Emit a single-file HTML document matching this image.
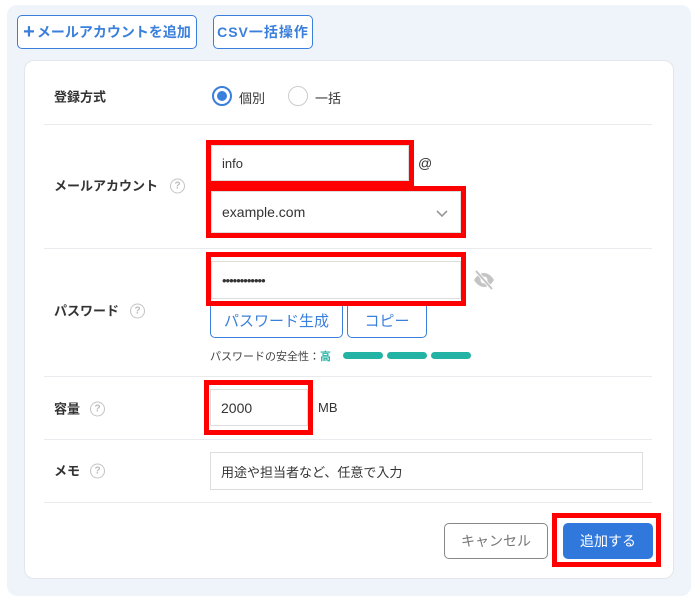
<!DOCTYPE html><html><head><meta charset="utf-8"><style>
*{box-sizing:border-box;margin:0;padding:0}
body{width:700px;height:601px;background:#fff;font-family:"Liberation Sans","Noto Sans CJK JP",sans-serif;color:#333;position:relative;overflow:hidden;font-size:13px}
.a{position:absolute}
.panel{left:7px;top:5px;width:684px;height:591px;background:#eff4fb;border-radius:10px}
.card{left:24px;top:60px;width:650px;height:519px;background:#fff;border:1px solid #e3e6ea;border-radius:10px}
.btn{border:1.5px solid #3a7fdc;border-radius:5px;background:#fff;color:#3a7fdc;display:flex;align-items:center;justify-content:center;font-size:14px;font-weight:bold}
.obtn{border:1px solid #3a7fdc;border-radius:5px;color:#3a7fdc;display:flex;align-items:center;justify-content:center;font-size:15px;background:#fff}
.lbl{font-weight:bold;font-size:13px;color:#333;transform:translateY(-50%)}
.hr{height:1px;background:#e8eaed;left:44px;width:608px}
.q{width:15px;height:15px;border:1.5px solid #c4c4c4;border-radius:50%;color:#bbb;font-size:10px;font-weight:bold;display:flex;align-items:center;justify-content:center;transform:translateY(-50%)}
.red{border:5px solid #f00}
.inp{border:1px solid #ddd;background:#fff;display:flex;align-items:center;padding-left:10px;font-size:14px;color:#333}
.bar{height:7px;width:40px;background:#22b3a4;border-radius:4px;top:352px}
</style></head><body>
<div class="a panel"></div>
<div class="a btn" style="left:17px;top:15px;width:180px;height:34px"><span style="font-size:20px;margin-right:2px;font-weight:bold">+</span>メールアカウントを追加</div>
<div class="a btn" style="left:213px;top:15px;width:100px;height:34px;letter-spacing:1px">CSV一括操作</div>
<div class="a card"></div>

<div class="a lbl" style="left:54px;top:96px">登録方式</div>
<div class="a" style="left:212px;top:86px;width:20px;height:20px;border:2px solid #3a7fdc;border-radius:50%"><div style="margin:3px;width:10px;height:10px;border-radius:50%;background:#3a7fdc"></div></div>
<div class="a" style="left:239px;top:88px;font-size:13px">個別</div>
<div class="a" style="left:288px;top:86px;width:20px;height:20px;border:1.5px solid #ccc;border-radius:50%"></div>
<div class="a" style="left:315px;top:88px;font-size:13px">一括</div>
<div class="a hr" style="top:124px"></div>

<div class="a lbl" style="left:54px;top:185px">メールアカウント</div>
<div class="a q" style="left:170px;top:186px">?</div>
<div class="a red" style="left:206px;top:140px;width:208px;height:46px"></div>
<div class="a inp" style="left:211px;top:145px;width:198px;height:36px;font-size:13px">info</div>
<div class="a" style="left:418px;top:155px;font-size:14px">@</div>
<div class="a red" style="left:206px;top:186px;width:260px;height:52px"></div>
<div class="a inp" style="left:211px;top:191px;width:250px;height:42px">example.com</div>
<svg class="a" style="left:435px;top:209px" width="14" height="10"><path d="M2 2l5 5 5-5" stroke="#999" stroke-width="1.6" fill="none"/></svg>
<div class="a hr" style="top:248px"></div>

<div class="a lbl" style="left:54px;top:310px">パスワード</div>
<div class="a q" style="left:130px;top:311px">?</div>
<div class="a obtn" style="left:210px;top:302px;width:133px;height:36px">パスワード生成</div>
<div class="a obtn" style="left:347px;top:302px;width:80px;height:36px">コピー</div>
<div class="a red" style="left:206px;top:252px;width:260px;height:54px"></div>
<div class="a inp" style="left:211px;top:261px;width:250px;height:38px;font-size:13px;letter-spacing:-1px">••••••••••••</div>
<svg class="a" style="left:472px;top:269px" width="24" height="22" viewBox="0 0 24 22"><path d="M2 11c3-5 7-7 10-7s7 2 10 7c-3 5-7 7-10 7S5 16 2 11z" fill="#c4c4c4"/><circle cx="12" cy="11" r="3.5" fill="#fff"/><path d="M4 2l16 18" stroke="#fff" stroke-width="3.5"/><path d="M4 2l16 18" stroke="#c4c4c4" stroke-width="2"/></svg>
<div class="a" style="left:210px;top:348px;font-size:11px;color:#444">パスワードの安全性：<span style="color:#22b3a4;font-weight:bold">高</span></div>
<div class="a bar" style="left:343px"></div><div class="a bar" style="left:387px"></div><div class="a bar" style="left:431px"></div>
<div class="a hr" style="top:376px"></div>

<div class="a lbl" style="left:54px;top:408px">容量</div>
<div class="a q" style="left:90px;top:409px">?</div>
<div class="a red" style="left:204px;top:380px;width:109px;height:55px"></div>
<div class="a inp" style="left:210px;top:389px;width:98px;height:37px">2000</div>
<div class="a" style="left:318px;top:400px;font-size:13px">MB</div>
<div class="a hr" style="top:439px"></div>

<div class="a lbl" style="left:54px;top:470px">メモ</div>
<div class="a q" style="left:90px;top:471px">?</div>
<div class="a inp" style="left:210px;top:452px;width:433px;height:38px;font-size:13px">用途や担当者など、任意で入力</div>
<div class="a hr" style="top:502px"></div>

<div class="a" style="left:444px;top:523px;width:104px;height:36px;border:1px solid #888;border-radius:5px;display:flex;align-items:center;justify-content:center;color:#777;font-size:14px">キャンセル</div>
<div class="a red" style="left:552px;top:513px;width:109px;height:54px"></div>
<div class="a" style="left:563px;top:523px;width:90px;height:36px;background:#3178dd;border-radius:5px;display:flex;align-items:center;justify-content:center;color:#fff;font-size:14px">追加する</div>
</body></html>
